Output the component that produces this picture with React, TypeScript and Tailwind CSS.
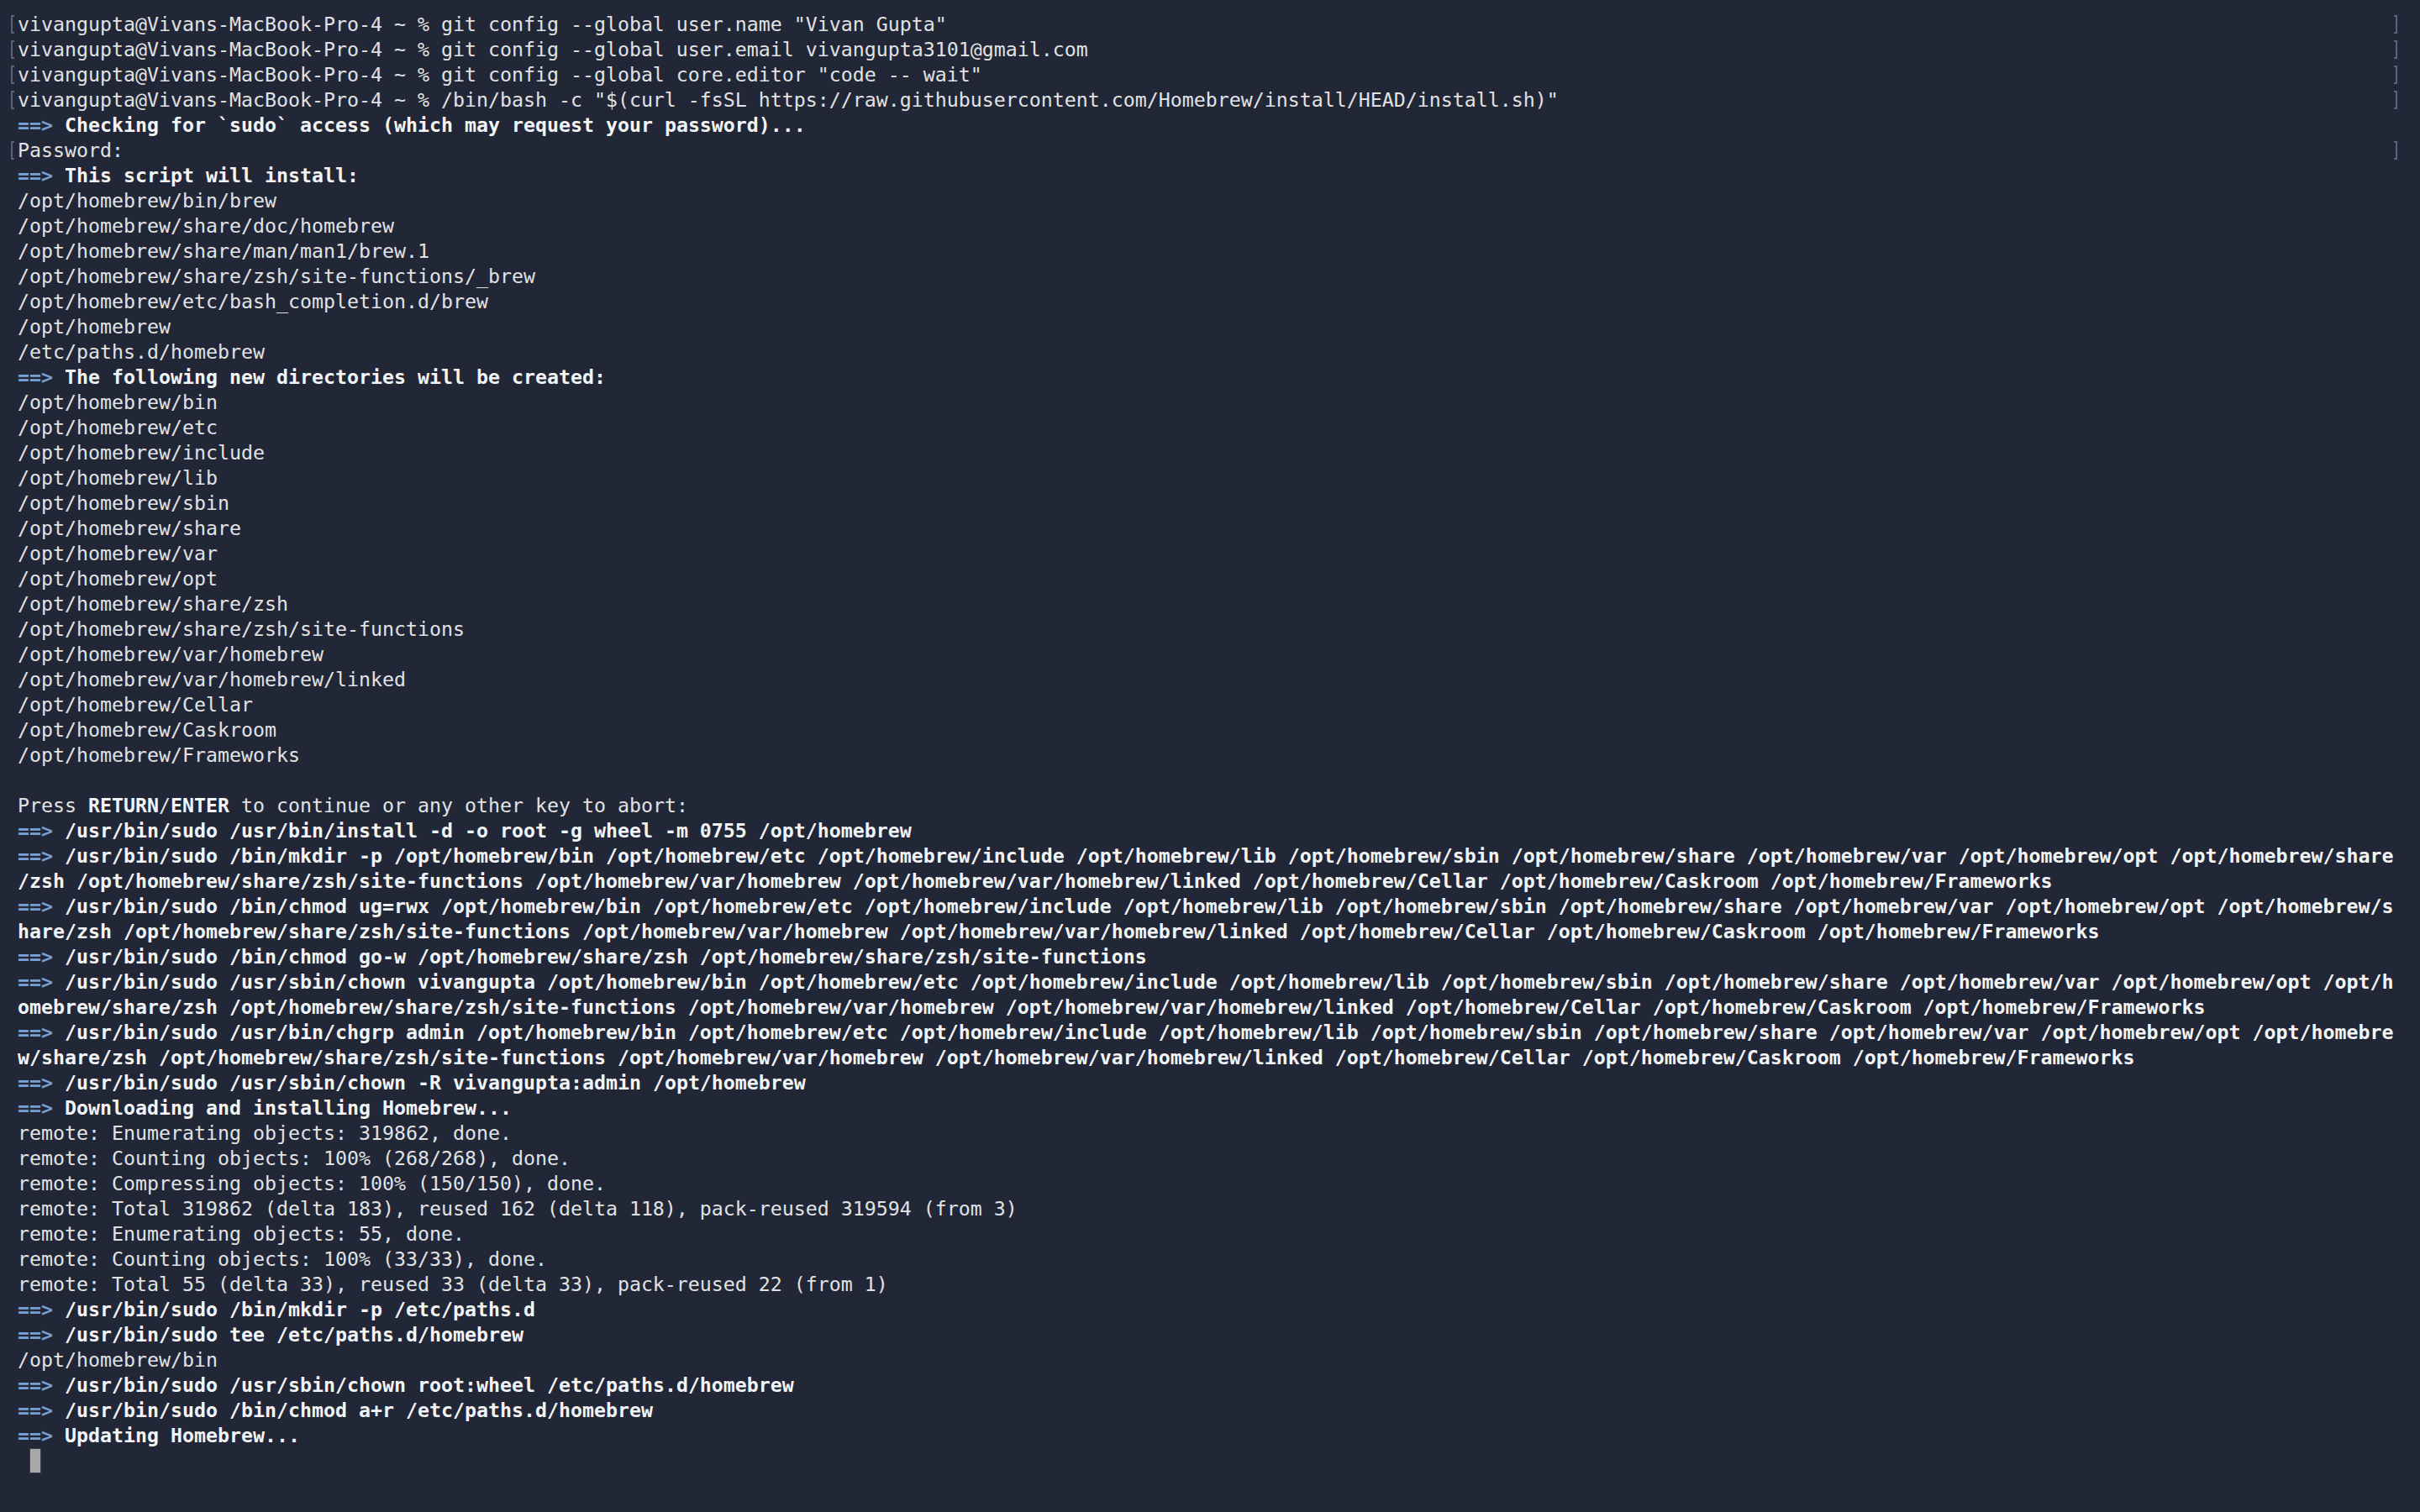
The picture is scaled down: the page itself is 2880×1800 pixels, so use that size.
type Line = {
  text?: string;
  kind?: "plain" | "arrow" | "bold" | "press" | "blank";
  mark?: boolean;
};

const lines: Line[] = [
  { text: 'vivangupta@Vivans-MacBook-Pro-4 ~ % git config --global user.name "Vivan Gupta"', mark: true },
  { text: "vivangupta@Vivans-MacBook-Pro-4 ~ % git config --global user.email vivangupta3101@gmail.com", mark: true },
  { text: 'vivangupta@Vivans-MacBook-Pro-4 ~ % git config --global core.editor "code -- wait"', mark: true },
  {
    text: 'vivangupta@Vivans-MacBook-Pro-4 ~ % /bin/bash -c "$(curl -fsSL https://raw.githubusercontent.com/Homebrew/install/HEAD/install.sh)"',
    mark: true,
  },
  { kind: "arrow", text: "Checking for `sudo` access (which may request your password)..." },
  { text: "Password:", mark: true },
  { kind: "arrow", text: "This script will install:" },
  { text: "/opt/homebrew/bin/brew" },
  { text: "/opt/homebrew/share/doc/homebrew" },
  { text: "/opt/homebrew/share/man/man1/brew.1" },
  { text: "/opt/homebrew/share/zsh/site-functions/_brew" },
  { text: "/opt/homebrew/etc/bash_completion.d/brew" },
  { text: "/opt/homebrew" },
  { text: "/etc/paths.d/homebrew" },
  { kind: "arrow", text: "The following new directories will be created:" },
  { text: "/opt/homebrew/bin" },
  { text: "/opt/homebrew/etc" },
  { text: "/opt/homebrew/include" },
  { text: "/opt/homebrew/lib" },
  { text: "/opt/homebrew/sbin" },
  { text: "/opt/homebrew/share" },
  { text: "/opt/homebrew/var" },
  { text: "/opt/homebrew/opt" },
  { text: "/opt/homebrew/share/zsh" },
  { text: "/opt/homebrew/share/zsh/site-functions" },
  { text: "/opt/homebrew/var/homebrew" },
  { text: "/opt/homebrew/var/homebrew/linked" },
  { text: "/opt/homebrew/Cellar" },
  { text: "/opt/homebrew/Caskroom" },
  { text: "/opt/homebrew/Frameworks" },
  { kind: "blank" },
  { kind: "press" },
  { kind: "arrow", text: "/usr/bin/sudo /usr/bin/install -d -o root -g wheel -m 0755 /opt/homebrew" },
  {
    kind: "arrow",
    text: "/usr/bin/sudo /bin/mkdir -p /opt/homebrew/bin /opt/homebrew/etc /opt/homebrew/include /opt/homebrew/lib /opt/homebrew/sbin /opt/homebrew/share /opt/homebrew/var /opt/homebrew/opt /opt/homebrew/share",
  },
  {
    kind: "bold",
    text: "/zsh /opt/homebrew/share/zsh/site-functions /opt/homebrew/var/homebrew /opt/homebrew/var/homebrew/linked /opt/homebrew/Cellar /opt/homebrew/Caskroom /opt/homebrew/Frameworks",
  },
  {
    kind: "arrow",
    text: "/usr/bin/sudo /bin/chmod ug=rwx /opt/homebrew/bin /opt/homebrew/etc /opt/homebrew/include /opt/homebrew/lib /opt/homebrew/sbin /opt/homebrew/share /opt/homebrew/var /opt/homebrew/opt /opt/homebrew/s",
  },
  {
    kind: "bold",
    text: "hare/zsh /opt/homebrew/share/zsh/site-functions /opt/homebrew/var/homebrew /opt/homebrew/var/homebrew/linked /opt/homebrew/Cellar /opt/homebrew/Caskroom /opt/homebrew/Frameworks",
  },
  { kind: "arrow", text: "/usr/bin/sudo /bin/chmod go-w /opt/homebrew/share/zsh /opt/homebrew/share/zsh/site-functions" },
  {
    kind: "arrow",
    text: "/usr/bin/sudo /usr/sbin/chown vivangupta /opt/homebrew/bin /opt/homebrew/etc /opt/homebrew/include /opt/homebrew/lib /opt/homebrew/sbin /opt/homebrew/share /opt/homebrew/var /opt/homebrew/opt /opt/h",
  },
  {
    kind: "bold",
    text: "omebrew/share/zsh /opt/homebrew/share/zsh/site-functions /opt/homebrew/var/homebrew /opt/homebrew/var/homebrew/linked /opt/homebrew/Cellar /opt/homebrew/Caskroom /opt/homebrew/Frameworks",
  },
  {
    kind: "arrow",
    text: "/usr/bin/sudo /usr/bin/chgrp admin /opt/homebrew/bin /opt/homebrew/etc /opt/homebrew/include /opt/homebrew/lib /opt/homebrew/sbin /opt/homebrew/share /opt/homebrew/var /opt/homebrew/opt /opt/homebre",
  },
  {
    kind: "bold",
    text: "w/share/zsh /opt/homebrew/share/zsh/site-functions /opt/homebrew/var/homebrew /opt/homebrew/var/homebrew/linked /opt/homebrew/Cellar /opt/homebrew/Caskroom /opt/homebrew/Frameworks",
  },
  { kind: "arrow", text: "/usr/bin/sudo /usr/sbin/chown -R vivangupta:admin /opt/homebrew" },
  { kind: "arrow", text: "Downloading and installing Homebrew..." },
  { text: "remote: Enumerating objects: 319862, done." },
  { text: "remote: Counting objects: 100% (268/268), done." },
  { text: "remote: Compressing objects: 100% (150/150), done." },
  { text: "remote: Total 319862 (delta 183), reused 162 (delta 118), pack-reused 319594 (from 3)" },
  { text: "remote: Enumerating objects: 55, done." },
  { text: "remote: Counting objects: 100% (33/33), done." },
  { text: "remote: Total 55 (delta 33), reused 33 (delta 33), pack-reused 22 (from 1)" },
  { kind: "arrow", text: "/usr/bin/sudo /bin/mkdir -p /etc/paths.d" },
  { kind: "arrow", text: "/usr/bin/sudo tee /etc/paths.d/homebrew" },
  { text: "/opt/homebrew/bin" },
  { kind: "arrow", text: "/usr/bin/sudo /usr/sbin/chown root:wheel /etc/paths.d/homebrew" },
  { kind: "arrow", text: "/usr/bin/sudo /bin/chmod a+r /etc/paths.d/homebrew" },
  { kind: "arrow", text: "Updating Homebrew..." },
];

function Row({ line }: { line: Line }) {
  const kind = line.kind ?? "plain";
  return (
    <div className="flex h-[30px] items-center">
      {/* left gutter with mark */}
      <div className="flex w-[21px] shrink-0 items-center pl-[13px]">
        {line.mark && <div className="h-[22px] w-[4px] border-y-2 border-l-2 border-[#5b6277]" />}
      </div>
      <div className="w-[2828px] shrink-0 whitespace-pre text-[#e2e2e2]">
        {kind === "arrow" && (
          <>
            <span className="font-bold text-[#79a0d4]">==&gt; </span>
            <span className="font-bold text-[#f4f4f4]">{line.text}</span>
          </>
        )}
        {kind === "bold" && <span className="font-bold text-[#f4f4f4]">{line.text}</span>}
        {kind === "plain" && line.text}
        {kind === "press" && (
          <>
            Press <span className="font-bold text-[#f4f4f4]">RETURN</span>/
            <span className="font-bold text-[#f4f4f4]">ENTER</span> to continue or any other key to abort:
          </>
        )}
      </div>
      <div className="flex w-[10px] shrink-0 items-center">
        {line.mark && <div className="h-[22px] w-[4px] border-y-2 border-r-2 border-[#5b6277]" />}
      </div>
    </div>
  );
}

export default function App() {
  return (
    <div
      className="h-[1800px] w-[2880px] overflow-hidden bg-[#222738] pt-[14px] text-[23.26px] leading-[30px]"
      style={{ fontFamily: '"DejaVu Sans Mono", "Liberation Mono", monospace' }}
    >
      {lines.map((line, i) => (
        <Row key={i} line={line} />
      ))}
      {/* cursor line */}
      <div className="flex h-[30px] items-center">
        <div className="w-[35px] shrink-0" />
        <div className="h-[30px] w-[14px] border border-[#3a3f4e] bg-[#a9a9a9]" />
      </div>
    </div>
  );
}
